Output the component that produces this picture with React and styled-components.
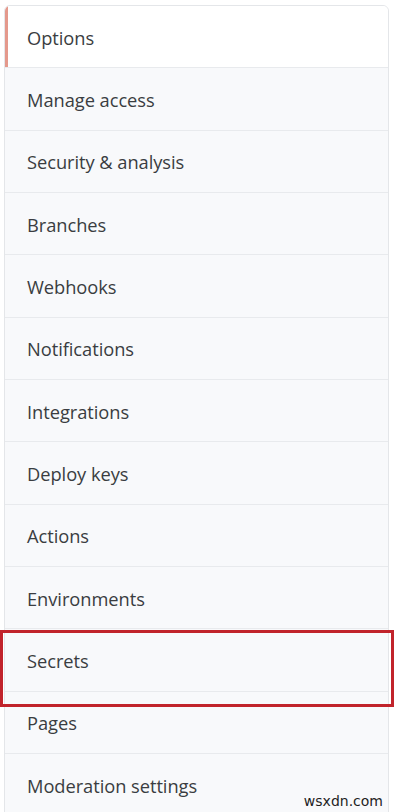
import React from "react";
import styled, { createGlobalStyle } from "styled-components";

const Global = createGlobalStyle`
  html, body { margin: 0; padding: 0; background: #ffffff; }
  body { font-family: "Open Sans", "Noto Sans", sans-serif; overflow: hidden; }
`;

const Page = styled.div`
  position: relative;
  width: 394px;
  height: 812px;
  overflow: hidden;
  background: #ffffff;
  padding: 5px 5px 0 4px;
  box-sizing: border-box;
`;

const Menu = styled.nav`
  display: flex;
  flex-direction: column;
  border: 1px solid #e4e6e9;
  border-radius: 6px 6px 0 0;
  overflow: hidden;
  background: #f8f9fb;
`;

const Item = styled.div`
  position: relative;
  display: flex;
  align-items: center;
  height: 62.33px;
  box-sizing: border-box;
  padding-left: 22px;
  padding-top: 1px;
  border-bottom: 1px solid #e8eaed;
  background: ${(p) => (p.$active ? "#ffffff" : "#f8f9fb")};
  color: #3a3d41;
  font-size: 18.3px;
  letter-spacing: -0.05px;
  &::before {
    content: "";
    display: ${(p) => (p.$active ? "block" : "none")};
    position: absolute;
    left: 0;
    top: 0;
    bottom: 0;
    width: 3px;
    background: #e4998c;
  }
`;

const Highlight = styled.div`
  position: absolute;
  left: 0;
  top: 630px;
  width: 394px;
  height: 77px;
  box-sizing: border-box;
  border: 3px solid #c1232b;
  pointer-events: none;
`;

const Watermark = styled.div`
  position: absolute;
  right: 11px;
  bottom: 3px;
  font-family: "DejaVu Sans", Verdana, sans-serif;
  font-size: 14px;
  color: #1e1e1e;
`;

const items = [
  "Options",
  "Manage access",
  "Security & analysis",
  "Branches",
  "Webhooks",
  "Notifications",
  "Integrations",
  "Deploy keys",
  "Actions",
  "Environments",
  "Secrets",
  "Pages",
  "Moderation settings",
];

export default function App() {
  return (
    <>
      <Global />
      <Page>
        <Menu>
          {items.map((label, i) => (
            <Item key={label} $active={i === 0}>
              {label}
            </Item>
          ))}
        </Menu>
        <Highlight />
        <Watermark>wsxdn.com</Watermark>
      </Page>
    </>
  );
}
